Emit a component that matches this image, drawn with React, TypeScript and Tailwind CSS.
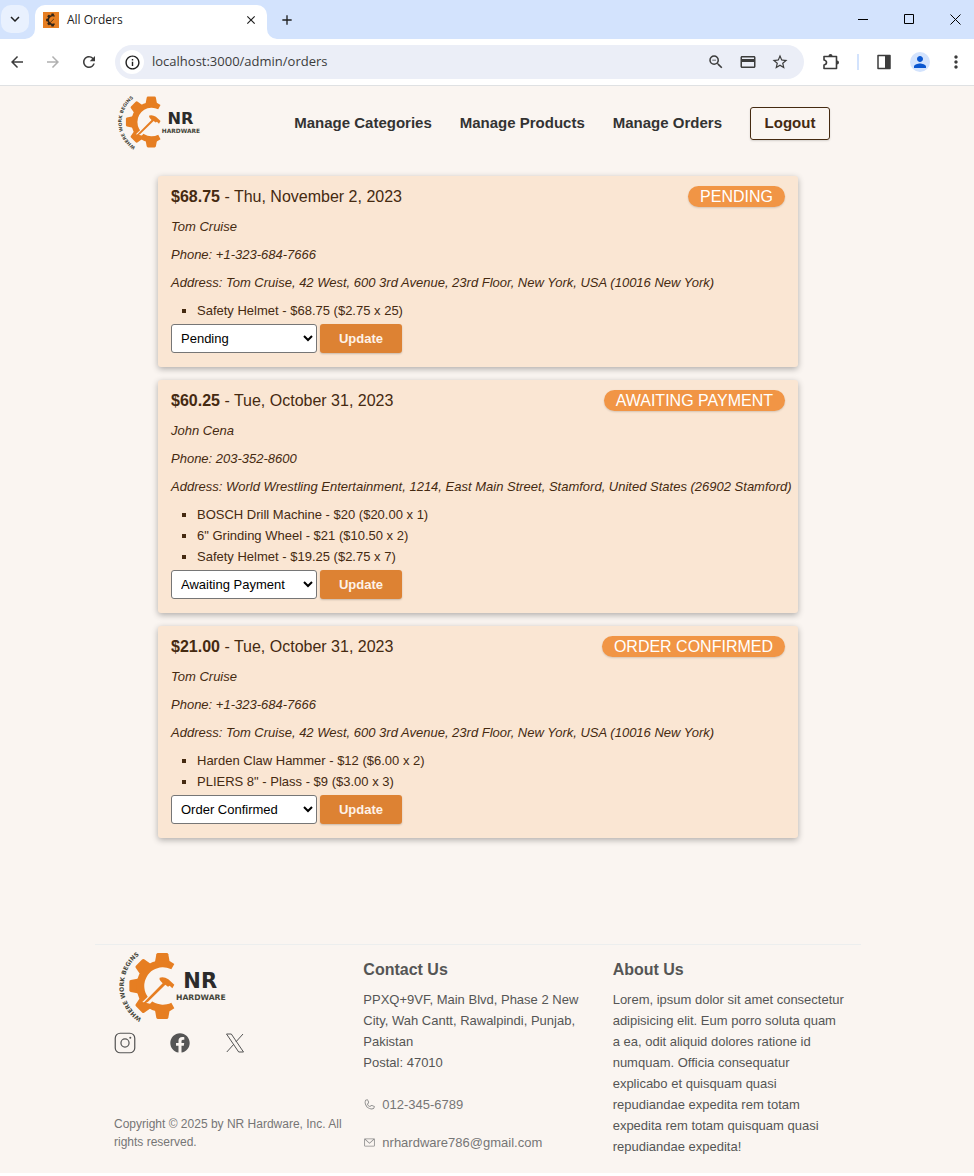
import React from 'react';
import {
  MdArrowBack,
  MdArrowForward,
  MdRefresh,
  MdInfoOutline,
  MdZoomOut,
  MdOutlineCreditCard,
  MdStarBorder,
  MdPerson,
  MdMoreVert,
  MdClose,
  MdAdd,
  MdKeyboardArrowDown,
} from 'react-icons/md';
import { PiInstagramLogoLight, PiPhone, PiEnvelopeSimple } from 'react-icons/pi';
import { FaFacebook } from 'react-icons/fa';

type Order = {
  total: string;
  date: string;
  status: string;
  customer: string;
  phone: string;
  address: string;
  items: string[];
};

const STATUSES = ['Pending', 'Awaiting Payment', 'Order Confirmed', 'Shipped', 'Delivered'];

const ORDERS: Order[] = [
  {
    total: '$68.75',
    date: 'Thu, November 2, 2023',
    status: 'Pending',
    customer: 'Tom Cruise',
    phone: '+1-323-684-7666',
    address: 'Tom Cruise, 42 West, 600 3rd Avenue, 23rd Floor, New York, USA (10016 New York)',
    items: ['Safety Helmet - $68.75 ($2.75 x 25)'],
  },
  {
    total: '$60.25',
    date: 'Tue, October 31, 2023',
    status: 'Awaiting Payment',
    customer: 'John Cena',
    phone: '203-352-8600',
    address: 'World Wrestling Entertainment, 1214, East Main Street, Stamford, United States (26902 Stamford)',
    items: [
      'BOSCH Drill Machine - $20 ($20.00 x 1)',
      '6" Grinding Wheel - $21 ($10.50 x 2)',
      'Safety Helmet - $19.25 ($2.75 x 7)',
    ],
  },
  {
    total: '$21.00',
    date: 'Tue, October 31, 2023',
    status: 'Order Confirmed',
    customer: 'Tom Cruise',
    phone: '+1-323-684-7666',
    address: 'Tom Cruise, 42 West, 600 3rd Avenue, 23rd Floor, New York, USA (10016 New York)',
    items: ['Harden Claw Hammer - $12 ($6.00 x 2)', 'PLIERS 8" - Plass - $9 ($3.00 x 3)'],
  },
];

function GearShape({ fill }: { fill: string }) {
  return (
    <g fill={fill}>
      {[0, -45, -90, -135, -180].map((angle) => (
        <path
          key={angle}
          transform={`rotate(${angle} 159 137)`}
          d="M136 70 L141 42 Q142 38 146 38 H172 Q176 38 177 42 L182 70 Z"
        />
      ))}
      <path d="M182 63 L195 71 L186 87 A56 56 0 1 0 186 187 L195 204 L182 212 A78 78 0 1 1 182 63 Z" />
    </g>
  );
}

function Logo({ id, className }: { id: string; className: string }) {
  return (
    <svg viewBox="26 20 330 234" className={className} role="img" aria-label="NR Hardware">
      <defs>
        <path id={id} d="M106 240 A116 116 0 0 1 106 34" />
      </defs>
      <GearShape fill="#e67e22" />
      <path d="M99 185 L162 124 L174 137 L122 190 Z" fill="#faf5f1" />
      <path
        d="M102 188 L160 129 L153 121 Q149 116 151 112 Q164 108 177 117 L195 133 L189 144 L181 136 L176 139 L168 133 L116 184 Q106 192 102 188 Z"
        fill="#e67e22"
      />
      <text fontSize="18" fontWeight="700" fill="#45453a" className="font-['DejaVu_Sans',sans-serif]">
        <textPath href={`#${id}`} startOffset="10">
          WHERE WORK BEGINS
        </textPath>
      </text>
      <text x="222" y="144" fontSize="63" fontWeight="700" fill="#2b2b2b" className="font-['DejaVu_Sans',sans-serif]">
        NR
      </text>
      <text x="200" y="180" fontSize="23" fontWeight="700" fill="#45453a" className="font-['DejaVu_Sans',sans-serif]">
        HARDWARE
      </text>
    </svg>
  );
}

function BrowserBar() {
  return (
    <div className="font-['Open_Sans',sans-serif] text-[#1f1f1f]">
      <div className="flex h-[39px] items-end bg-[#d3e3fd]">
        <button
          aria-label="Search tabs"
          className="mb-[6px] ml-px flex size-7 items-center justify-center rounded-[10px] bg-[#e9f1fe]"
        >
          <MdKeyboardArrowDown className="size-[18px]" />
        </button>
        <div className="relative ml-[6px] flex h-[34px] w-[232px] items-center rounded-t-[10px] bg-white pr-[9px] pb-[5px] pl-2">
          <svg viewBox="0 0 10 10" className="absolute bottom-0 -left-[10px] size-[10px]" aria-hidden="true">
            <path d="M10 0 A10 10 0 0 1 0 10 H10 Z" fill="#fff" />
          </svg>
          <svg viewBox="0 0 10 10" className="absolute -right-[10px] bottom-0 size-[10px]" aria-hidden="true">
            <path d="M0 0 A10 10 0 0 0 10 10 H0 Z" fill="#fff" />
          </svg>
          <span className="flex size-4 items-center justify-center bg-[#e67e22]">
            <svg viewBox="50 30 170 214" className="size-[14px]" aria-hidden="true">
              <GearShape fill="#33261a" />
              <path d="M115 184 L180 120" stroke="#33261a" strokeWidth="12" />
            </svg>
          </span>
          <span className="ml-2 flex-1 text-xs">All Orders</span>
          <button aria-label="Close tab" className="flex">
            <MdClose className="size-[14px]" />
          </button>
        </div>
        <button aria-label="New tab" className="mb-[11px] ml-3 flex">
          <MdAdd className="size-4" />
        </button>
        <div className="mb-[14px] ml-auto flex gap-[35px] pr-[13px]">
          <button aria-label="Minimize">
            <svg viewBox="0 0 11 11" className="size-[11px]" fill="none" stroke="#000">
              <path d="M0 5.500H10" />
            </svg>
          </button>
          <button aria-label="Maximize">
            <svg viewBox="0 0 11 11" className="size-[11px]" fill="none" stroke="#000">
              <path d="M.5.5h9v9h-9z" />
            </svg>
          </button>
          <button aria-label="Close">
            <svg viewBox="0 0 11 11" className="size-[11px]" fill="none" stroke="#000">
              <path d="M.5.5l10 10M10.500.5l-10 10" />
            </svg>
          </button>
        </div>
      </div>
      <div className="flex h-[47px] items-center border-b border-[#dfe1e3] bg-white pr-2 pl-2 text-[#3c3c3c]">
        <button aria-label="Back" className="flex">
          <MdArrowBack className="size-[18px]" />
        </button>
        <button aria-label="Forward" disabled className="ml-[18px] flex text-[#b0b0b0]">
          <MdArrowForward className="size-[18px]" />
        </button>
        <button aria-label="Reload" className="ml-[18px] flex">
          <MdRefresh className="size-[18px]" />
        </button>
        <div className="ml-[17px] flex h-[34px] flex-1 items-center rounded-full bg-[#ebeef7] pr-[15px] pl-[5px]">
          <span className="flex size-6 items-center justify-center rounded-full bg-white text-[#1f1f1f]">
            <MdInfoOutline className="size-[17px]" />
          </span>
          <input
            aria-label="Address"
            defaultValue="localhost:3000/admin/orders"
            className="ml-2 min-w-0 flex-1 bg-transparent text-[13px] outline-none"
          />
          <div className="flex items-center gap-[14px]">
            <MdZoomOut className="size-[18px]" />
            <MdOutlineCreditCard className="size-[18px]" />
            <MdStarBorder className="size-[18px]" />
          </div>
        </div>
        <svg viewBox="0 0 18 18" className="ml-[18px] size-[18px]" aria-hidden="true">
          <path
            d="M2 3.500H14.500V15.500H2V12 Q4.500 11.500 4.500 9.500 T2 7 Z"
            fill="none"
            stroke="currentColor"
            strokeWidth="1.600"
            strokeLinejoin="round"
          />
          <path d="M6.500 3 A2 2 0 0 1 10.500 3 Z M15 7.500 A2 2 0 0 1 15 11.500 Z" fill="currentColor" />
        </svg>
        <span className="ml-[17px] h-4 w-[2px] bg-[#d3e3fd]" />
        <svg viewBox="0 0 18 18" className="ml-[16px] size-[18px]" aria-hidden="true">
          <path d="M3 2.500h12v13H3z" fill="none" stroke="currentColor" strokeWidth="1.500" strokeLinejoin="round" />
          <path d="M10 2.500h5v13h-5z" fill="currentColor" />
        </svg>
        <button
          aria-label="Profile"
          className="ml-[17px] flex size-5 items-center justify-center rounded-full bg-[#d3e3fd] text-[#0b57d0]"
        >
          <MdPerson className="size-[18px]" />
        </button>
        <button aria-label="Menu" className="ml-[16px] flex">
          <MdMoreVert className="size-5" />
        </button>
      </div>
    </div>
  );
}

function OrderCard({ order, index }: { order: Order; index: number }) {
  const selectId = `order-status-${index}`;
  return (
    <article className="rounded-[3px] bg-[#fae6d3] px-[13px] pt-[10px] pb-[14px] text-[13px] text-[#452a11] shadow-[0_2px_6px_rgba(0,0,0,0.3)]">
      <div className="flex items-center justify-between text-base leading-[21px]">
        <h2>
          <strong>{order.total}</strong> - {order.date}
        </h2>
        <span className="rounded-full bg-[#f19545] px-3 text-white uppercase shadow-[0_1px_2px_rgba(0,0,0,0.15)]">
          {order.status}
        </span>
      </div>
      <div className="mt-[10px] -mr-2 flex flex-col gap-2 leading-5 italic">
        <p>{order.customer}</p>
        <p>Phone: {order.phone}</p>
        <p>Address: {order.address}</p>
      </div>
      <ul className="mt-[7px] list-[square] pl-[26px] leading-[21px]">
        {order.items.map((item) => (
          <li key={item}>{item}</li>
        ))}
      </ul>
      <form className="mt-[3px] flex gap-[3px]" onSubmit={(e) => e.preventDefault()}>
        <label htmlFor={selectId} className="sr-only">
          Order status
        </label>
        <select
          id={selectId}
          defaultValue={order.status}
          className="h-[29px] w-[146px] rounded-[3px] border border-[#767676] bg-white px-[5px] text-black"
        >
          {STATUSES.map((s) => (
            <option key={s}>{s}</option>
          ))}
        </select>
        <button className="h-[29px] w-[82px] rounded-[3px] bg-[#dd8233] font-bold text-[#fdf2e9] shadow-[0_1px_2px_rgba(0,0,0,0.2)]">
          Update
        </button>
      </form>
    </article>
  );
}

export default function App() {
  return (
    <div className="bg-white">
      <BrowserBar />
      <div className="bg-[#faf5f1] pr-[18px] font-['Liberation_Sans',Arial,sans-serif]">
        <header className="mx-auto flex max-w-[764px] items-center justify-between pt-[6px] pr-[30px] pl-[21px]">
          <a href="#home">
            <Logo id="header-logo-arc" className="h-[60px] w-[85px]" />
          </a>
          <nav className="mt-[3px] flex items-center gap-[28px] text-[15px] font-bold text-[#333]">
            <a href="#categories">Manage Categories</a>
            <a href="#products">Manage Products</a>
            <a href="#orders">Manage Orders</a>
            <button className="h-[33px] w-20 rounded-[3px] border border-[#452a11] text-[#452a11] shadow-[0_1px_2px_rgba(0,0,0,0.15)]">
              Logout
            </button>
          </nav>
        </header>

        <main className="mx-auto flex max-w-[640px] flex-col gap-[13px] pt-6">
          {ORDERS.map((order, i) => (
            <OrderCard key={i} order={order} index={i} />
          ))}
        </main>

        <footer className="mx-auto mt-[106px] grid max-w-[766px] grid-cols-3 gap-[17px] border-t border-[#eceeee] pr-4 pb-4 pl-[19px] text-[13px] leading-[21px] text-[#555]">
          <div className="flex flex-col">
            <a href="#home" className="mt-[2px] ml-1 self-start">
              <Logo id="footer-logo-arc" className="h-[78px] w-[110px]" />
            </a>
            <div className="-ml-[2px] flex items-center gap-[29px] pt-[5px]">
              <a href="#instagram" aria-label="Instagram" className="flex size-[26px] items-center justify-center">
                <PiInstagramLogoLight className="size-[26px]" />
              </a>
              <a href="#facebook" aria-label="Facebook" className="flex size-[26px] items-center justify-center">
                <FaFacebook className="size-5" />
              </a>
              <a href="#x" aria-label="X" className="flex size-[26px] items-center justify-center">
                <svg viewBox="0 0 20 20" className="size-5" fill="none" stroke="currentColor">
                  <path d="M1.500 1h4.800L18.500 19h-4.800zM18 1l-7.200 8M9 11L1.800 19" />
                </svg>
              </a>
            </div>
            <p className="mt-auto pb-[6px] text-xs leading-[18px] text-[#767676]">
              Copyright © 2025 by NR Hardware, Inc. All rights reserved.
            </p>
          </div>
          <div>
            <h3 className="mt-[14px] text-base leading-[21px] font-bold">Contact Us</h3>
            <address className="mt-[9px] not-italic">
              PPXQ+9VF, Main Blvd, Phase 2 New City, Wah Cantt, Rawalpindi, Punjab, Pakistan
              <br />
              Postal: 47010
            </address>
            <a href="tel:0123456789" className="mt-[21px] flex items-center gap-[6px] text-[#767676]">
              <PiPhone className="size-[13px] text-[#8a8a8a]" />
              012-345-6789
            </a>
            <a href="mailto:nrhardware786@gmail.com" className="mt-[17px] flex items-center gap-[6px] text-[#767676]">
              <PiEnvelopeSimple className="size-[13px] text-[#8a8a8a]" />
              nrhardware786@gmail.com
            </a>
          </div>
          <div>
            <h3 className="mt-[14px] text-base leading-[21px] font-bold">About Us</h3>
            <p className="mt-[9px]">
              Lorem, ipsum dolor sit amet consectetur adipisicing elit. Eum porro soluta quam a ea, odit aliquid
              dolores ratione id numquam. Officia consequatur explicabo et quisquam quasi repudiandae expedita rem
              totam expedita rem totam quisquam quasi repudiandae expedita!
            </p>
          </div>
        </footer>
      </div>
    </div>
  );
}
